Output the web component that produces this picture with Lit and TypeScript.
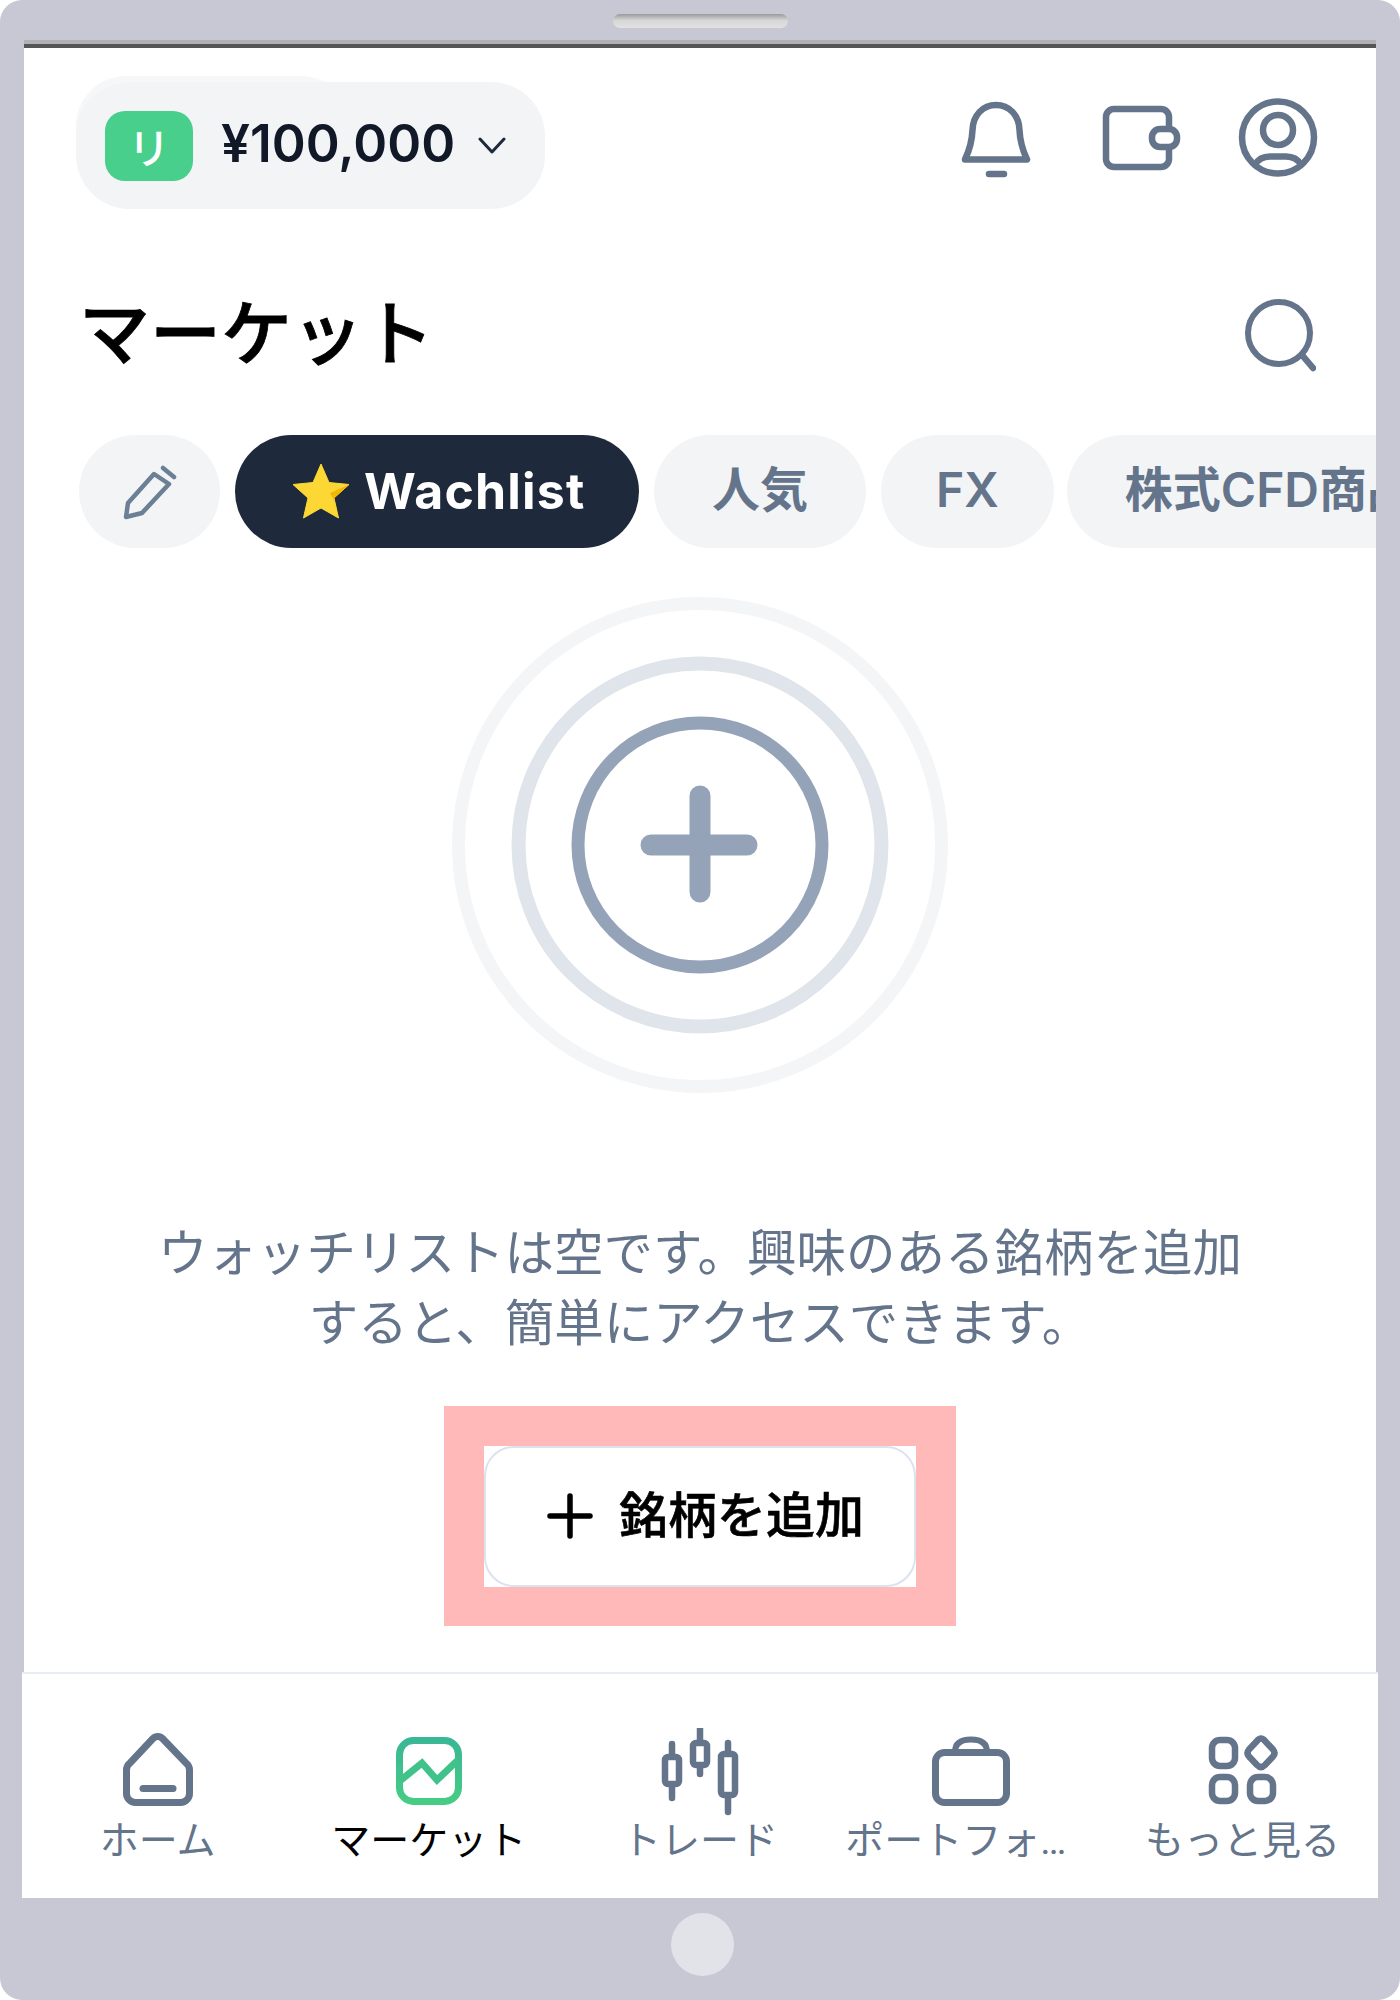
import { LitElement, html, css, svg } from "lit";
import { customElement } from "lit/decorators.js";

const SANS = `Inter, "Noto Sans CJK JP", sans-serif`;

const navItems = [
  {
    label: "ホーム",
    icon: svg`<path d="M40 10.5a6.5 6.5 0 0 1 9.5 0L73 35a9 9 0 0 1 3.5 6.5V65a9 9 0 0 1-9 9.5H22.5a9 9 0 0 1-9-9.5V41.5A9 9 0 0 1 17 35Z"/><path d="M30 60.5H60"/>`,
  },
  {
    label: "マーケット",
    active: true,
    icon: svg`<defs><linearGradient id="mk" x1="0" y1="0" x2="0" y2="1"><stop offset="0" stop-color="#3ab795"/><stop offset="1" stop-color="#46cc84"/></linearGradient></defs>
      <rect x="15.5" y="12.5" width="59" height="61" rx="14" stroke="url(#mk)"/>
      <path d="M17 52L38 35L53 52L74 32" stroke="#40c28a" stroke-linejoin="miter" stroke-linecap="butt"/>`,
  },
  {
    label: "トレード",
    icon: svg`<g stroke-width="6.500"><path d="M17 16V70M45 0V46M73 15V84"/>
      <rect x="10" y="29" width="14" height="27" rx="3" fill="#fff"/>
      <rect x="38" y="15" width="14" height="22" rx="3" fill="#fff"/>
      <rect x="66" y="26" width="14" height="41" rx="3" fill="#fff"/></g>`,
  },
  {
    label: "ポートフォリオ",
    icon: svg`<rect x="9.5" y="24.5" width="71" height="50" rx="9"/><path d="M29 24C29 15 35 11.5 45 11.5S61 15 61 24" stroke-width="6"/>`,
  },
  {
    label: "もっと見る",
    icon: svg`<g stroke-width="6.5"><rect x="15" y="12" width="23" height="26" rx="8"/>
      <path d="M64 10.5Q66 10.500 68 13L76 21.500Q79 25 76 28.500L68 37Q64 41 60 37L52 28.500Q49 25 52 21.500L60 13Q62 10.500 64 10.500Z"/>
      <rect x="15" y="49" width="23" height="24" rx="8"/><rect x="53" y="49" width="23" height="24" rx="8"/></g>`,
  },
];

@customElement("app-root")
export class AppRoot extends LitElement {
  static styles = css`
    :host {
      display: block;
      width: 1400px;
      height: 2000px;
      font-family: ${css([SANS] as unknown as TemplateStringsArray)};
    }
    .device {
      height: 2000px;
      box-sizing: border-box;
      background: #c7c8d4;
      border-radius: 22px;
      display: flex;
      flex-direction: column;
      align-items: stretch;
    }
    .bezel-top {
      height: 40px;
      display: flex;
      justify-content: center;
      padding-top: 14px;
      box-sizing: border-box;
    }
    .speaker {
      width: 175px;
      height: 14px;
      border-radius: 7px;
      background: linear-gradient(#9a9a9a, #d6d6d6 45%, #e2e2e2);
    }
    .screen {
      flex: 1;
      margin: 4px 24px 0 24px;
      background: #fff;
      display: flex;
      flex-direction: column;
      border-top: 4px solid #555;
      box-shadow: 0 -4px 0 #b2b2b6;
      min-height: 0;
    }
    .main {
      flex: 1;
      display: flex;
      flex-direction: column;
      align-items: center;
      min-height: 0;
    }
    .header {
      align-self: stretch;
      display: flex;
      justify-content: space-between;
      align-items: flex-start;
      padding: 34px 58px 0 52px;
      position: relative;
      z-index: 0;
    }
    .account {
      position: relative;
      height: 127px;
      width: 469px;
      box-sizing: border-box;
      padding-left: 29px;
      background: #f3f4f6;
      border-radius: 54px;
      display: flex;
      align-items: center;
      font-size: 51.5px;
      font-weight: 600;
      color: #111827;
    }
    .account::before {
      content: "";
      position: absolute;
      left: 0;
      top: -6px;
      width: 275px;
      height: 100px;
      border-radius: 50px;
      background: #f6f7f8;
      z-index: -1;
    }
    .amount {
      padding-bottom: 5px;
    }
    .badge {
      width: 88px;
      height: 70px;
      border-radius: 20px;
      background: #48cf8b;
      color: #fff;
      font-size: 42px;
      font-weight: 500;
      display: flex;
      align-items: center;
      justify-content: center;
      margin-right: 28px;
    }
    .chevron {
      margin-left: 23px;
      width: 28px;
      height: 17px;
    }
    .actions {
      display: flex;
      margin-top: 15px;
    }
    svg.line {
      fill: none;
      stroke: #64748b;
      stroke-linecap: round;
      stroke-linejoin: round;
      display: block;
    }
    .title-row {
      align-self: stretch;
      display: flex;
      justify-content: space-between;
      align-items: center;
      margin-top: 81px;
      padding: 0 60px 0 55px;
      height: 90px;
    }
    h1 {
      margin: 0;
      font-size: 71px;
      font-weight: 500;
      -webkit-text-stroke: 0.8px #000;
      line-height: 90px;
      padding-bottom: 4px;
      color: #000;
    }
    .tabs {
      align-self: stretch;
      display: flex;
      gap: 15px;
      margin-top: 55px;
      padding-left: 55px;
      overflow: hidden;
    }
    .tab {
      flex: none;
      height: 113px;
      box-sizing: border-box;
      border-radius: 57px;
      background: #f3f4f6;
      color: #64748b;
      font-size: 48px;
      font-weight: 600;
      display: flex;
      align-items: center;
      padding: 0 58px 12px;
      white-space: nowrap;
    }
    .tab.edit {
      width: 141px;
      padding: 0;
      justify-content: center;
    }
    .tab.fx {
      padding: 0 55px 4px;
      margin-right: -2px;
    }
    .tab.on {
      width: 404px;
      background: #1e293b;
      color: #fff;
      padding: 0 0 2px 57px;
      gap: 14px;
      font-size: 50px;
      font-weight: 700;
      letter-spacing: 1.2px;
    }
    .rings {
      display: block;
      margin-top: 49px;
    }
    .message {
      margin: 125px 0 0;
      width: 1100px;
      font-size: 49.5px;
      line-height: 70px;
      text-align: center;
      color: #64748b;
      font-weight: 400;
    }
    .callout {
      margin-top: 48px;
      border: solid #ffb9b9;
      border-width: 40px 40px 39px;
      background: #fff;
    }
    .add {
      width: 432px;
      height: 141px;
      box-sizing: border-box;
      border: 2px solid #dbe3ef;
      border-radius: 30px;
      display: flex;
      align-items: center;
      padding-left: 61px;
      gap: 26px;
      font-size: 49px;
      font-weight: 500;
      -webkit-text-stroke: 0.6px #000;
      color: #000;
    }
    .add svg {
      margin-bottom: 1px;
    }
    .add span {
      padding-bottom: 11px;
    }
    .nav {
      height: 226px;
      box-sizing: border-box;
      margin: 0 -2px;
      border-top: 2px solid #e8edf3;
      padding-top: 54px;
      background: #fff;
      display: grid;
      grid-template-columns: repeat(5, 1fr);
    }
    .nav-item {
      display: flex;
      flex-direction: column;
      align-items: center;
      min-width: 0;
    }
    .nav-label {
      width: 252px;
      font-family: Roboto, "Noto Sans CJK JP", sans-serif;
      font-size: 39px;
      line-height: 56px;
      margin-top: -5px;
      color: #64748b;
      text-align: center;
      white-space: nowrap;
      overflow: hidden;
      text-overflow: ellipsis;
    }
    .nav-item.on .nav-label {
      color: #000;
    }
    .bezel-bottom {
      height: 102px;
      box-sizing: border-box;
      display: flex;
      justify-content: center;
      align-items: center;
      padding: 0 0 10px 4px;
    }
    .home-btn {
      width: 63px;
      height: 63px;
      border-radius: 50%;
      background: #e2e3e9;
    }
  `;

  render() {
    return html`
      <div class="device">
        <div class="bezel-top"><div class="speaker"></div></div>
        <div class="screen">
          <div class="main">
            <div class="header">
              <div class="account">
                <div class="badge">リ</div>
                <span class="amount">¥100,000</span>
                <svg class="line chevron" viewBox="0 0 28 17" style="stroke:#1e293b;stroke-width:3">
                  <path d="M2 2L14 15L26 2" />
                </svg>
              </div>
              <div class="actions">
                <svg class="line" width="72" height="82" viewBox="0 -3 72 82" style="stroke-width:6.5">
                  <path d="M5 59.5C9 51 12 42 12.5 30C13 15 23 5 36 5C49 5 59 15 59.5 30C60 42 63 51 67 59.5Z" />
                  <path d="M29 74H44" stroke-width="6.500" />
                </svg>
                <svg class="line" width="80" height="82" viewBox="0 -7 80 82" style="margin-left:70px;stroke-width:6.5">
                  <rect x="4" y="5" width="63" height="58" rx="8" />
                  <rect x="50" y="25" width="25" height="18" rx="8" fill="#fff" />
                </svg>
                <svg class="line" width="80" height="82" viewBox="0 0 80 82" style="margin-left:56px;stroke-width:6.5">
                  <circle cx="40" cy="40.5" r="36" />
                  <circle cx="40" cy="33" r="15" />
                  <path d="M17 68C20 62 26 59.5 32 59.5H48C54 59.5 60 62 63 68" />
                </svg>
              </div>
            </div>
            <div class="title-row">
              <h1>マーケット</h1>
              <svg class="line" width="72" height="74" viewBox="0 0 72 74" style="stroke-width:6">
                <circle cx="35" cy="35" r="31" />
                <path d="M58 57L69 70" stroke-width="6.500" />
              </svg>
            </div>
            <div class="tabs">
              <div class="tab edit">
                <svg class="line" width="54" height="56" viewBox="0 0 54 56" style="stroke:#6b7f95;stroke-width:4.500">
                  <path d="M31 10L46 20L19 49L3 53L5 39Z" />
                  <path d="M40 4L51 13" />
                </svg>
              </div>
              <div class="tab on">
                <svg width="58" height="56" viewBox="0 0 58 56">
                  <path
                    d="M29 1L37 19.5L57 21.5L42 35L46.5 55L29 45L11.500 55L16 35L1 21.500L21 19.500Z"
                    fill="#fdd835"
                    stroke="#fdd835"
                    stroke-width="1"
                    stroke-linejoin="round"
                  />
                  <path d="M57 21.500L42 35L43 39L38 30Z" fill="#f2b705" />
                </svg>
                <span>Wachlist</span>
              </div>
              <div class="tab">人気</div>
              <div class="tab fx">FX</div>
              <div class="tab">株式CFD商品</div>
            </div>
            <svg class="rings" width="496" height="496" viewBox="0 0 496 496" fill="none">
              <circle cx="248" cy="248" r="241.500" stroke="#f3f5f7" stroke-width="13" />
              <circle cx="248" cy="248" r="181.500" stroke="#e0e5eb" stroke-width="14" />
              <circle cx="248" cy="248" r="122" stroke="#94a3b8" stroke-width="13" />
              <path d="M248 199V295M199 248H295" stroke="#94a3b8" stroke-width="21" stroke-linecap="round" />
            </svg>
            <p class="message">ウォッチリストは空です。興味のある銘柄を追加すると、簡単にアクセスできます。</p>
            <div class="callout">
              <div class="add">
                <svg width="46" height="46" viewBox="0 0 46 46" fill="none" stroke="#000" stroke-width="5.500" stroke-linecap="round">
                  <path d="M23 3V43M3 23H43" />
                </svg>
                <span>銘柄を追加</span>
              </div>
            </div>
          </div>
          <div class="nav">
            ${navItems.map(
              (item) => html`
                <div class="nav-item ${item.active ? "on" : ""}">
                  <svg class="line" width="90" height="90" viewBox="0 0 90 90" style="stroke-width:7">${item.icon}</svg>
                  <div class="nav-label">${item.label}</div>
                </div>
              `
            )}
          </div>
        </div>
        <div class="bezel-bottom"><div class="home-btn"></div></div>
      </div>
    `;
  }
}
